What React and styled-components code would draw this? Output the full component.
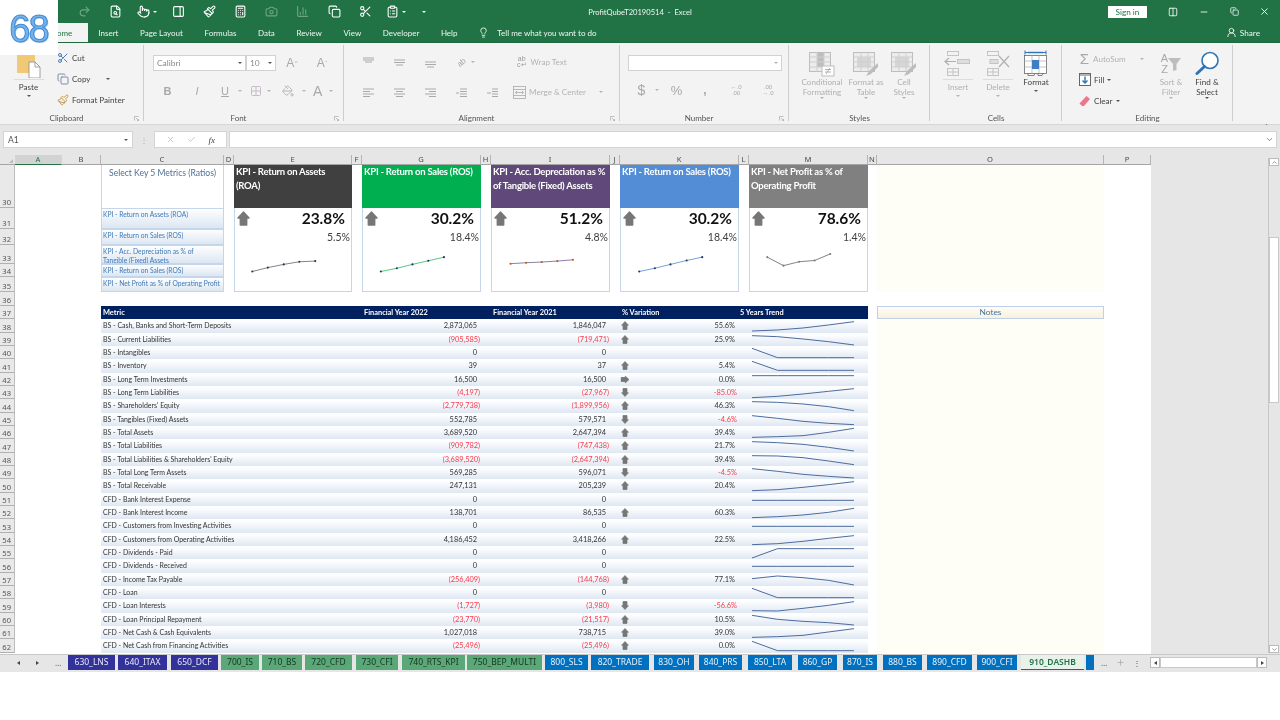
import React from "react";
import styled, { createGlobalStyle } from "styled-components";
import { Redo2, FileSearch, Pointer, PanelRight, Paintbrush, Calculator, Camera, ChartColumn, Copy, Scissors, ClipboardList, ChevronDown, ChevronUp, Lightbulb, UserRound, X, Check, Minus, Grid2x2, PaintBucket, Plus, Columns2 } from "lucide-react";

const Global = createGlobalStyle`
  html, body { margin: 0; padding: 0; background: #fff; overflow: hidden; }
  #root { width: 1280px; height: 720px; }
  * { box-sizing: border-box; }
`;

const UI = `Lato, "Noto Sans", sans-serif`;
const TABFONT = `"Noto Sans", "Open Sans", sans-serif`;
const CELL = `Lato, "Noto Sans", sans-serif`;

const Window = styled.div`
  position: relative; width: 1280px; height: 672px; display: flex; flex-direction: column;
  font-family: ${UI}; filter: blur(0.35px); overflow: hidden;
`;
const Badge = styled.div`
  position: absolute; left: 0; top: 0; width: 58px; height: 55px; background: #fff; z-index: 5;
  display: flex; align-items: center; justify-content: center; padding: 3px 1px 0 0;
  font: 400 38px/1 "Liberation Sans", sans-serif; color: #79b2e8; letter-spacing: -2px;
  -webkit-text-stroke: 1px #3f8ad6; text-shadow: 1px 1px 0 #b5d3f0;
`;
/* Title bar */
const TitleBar = styled.header`
  height: 23px; background: #217346; color: #fff; display: grid; grid-template-columns: 1fr auto 1fr; align-items: center;
`;
const Qat = styled.div`display: flex; align-items: center; padding-left: 69px;`;
const QatSlot = styled.span`
  width: ${p => p.$w || 31.2}px; display: flex; justify-content: center; align-items: center; opacity: ${p => (p.$dim ? 0.35 : 1)};
`;
const WindowTitle = styled.div`font-size: 7.6px; color: #f2f7f4; white-space: pre;`;
const TitleRight = styled.div`display: flex; align-items: center; justify-content: flex-end; padding-right: 0;`;
const SignIn = styled.div`
  width: 39px; height: 12px; background: #fff; color: #217346; font-size: 8.2px; line-height: 12px; text-align: center; margin-right: 11px;
`;
const WinBtn = styled.span`width: 30.5px; display: flex; justify-content: center;`;
const TabRow = styled.nav`height: 20px; background: #217346; display: flex; align-items: stretch; padding-left: 40px; border-bottom: 1px solid #1c6a3e;`;
const Tab = styled.div`
  padding: 0 10.8px; font-size: 8px; line-height: 20px; color: ${p => (p.$on ? "#217346" : "#eef6f1")};
  background: ${p => (p.$on ? "#f3f3f3" : "transparent")}; white-space: nowrap;
`;
const HomeTab = styled(Tab)`width: 47.5px; padding: 0 0 0 11px;`;
const TellMe = styled.div`display: flex; align-items: center; gap: 8px; margin-left: 10px; font-size: 8.05px; color: #eef6f1; line-height: 20px;`;
const ShareBox = styled.div`margin-left: auto; display: flex; align-items: center; gap: 3px; padding-right: 20px; font-size: 8.2px; color: #eef6f1;`;

/* Ribbon */
const Ribbon = styled.section`display: flex; height: 82px; background: #f3f3f3; border-bottom: 1px solid #d6d6d6;`;
const Group = styled.div`
  position: relative; width: ${p => p.$w}px; display: flex; flex-direction: column; margin-top: 2px;
  &::after { content: ""; position: absolute; right: 0; top: 0; bottom: 3px; width: 1px; background: #cdcdcd; }
`;
const GroupBody = styled.div`flex: 1; display: flex; padding-left: ${p => p.$pad || 0}px; min-height: 0;`;
const GroupLabel = styled.div`height: 12px; text-align: center; padding-right: ${p => p.$trim || 0}px; font-size: 8px; line-height: 12px; color: #555;`;
const Launcher = styled.svg`position: absolute; right: 5px; bottom: 3px; width: 5px; height: 5px;`;
const Stack = styled.div`display: flex; flex-direction: column; width: ${p => p.$w}px; padding-top: ${p => p.$top || 0}px;`;
const SmallCmd = styled.div`
  height: ${p => p.$h || 21}px; display: flex; align-items: center; gap: 3px; font-size: 8.1px; color: ${p => (p.$off ? "#b3b3b3" : "#444")}; white-space: nowrap;
`;
const Large = styled.div`
  width: ${p => p.$w}px; display: flex; flex-direction: column; align-items: center; padding-top: 5px;
  font-size: 8.1px; line-height: 10px; color: ${p => (p.$off ? "#b0b0b0" : "#444")}; text-align: center; white-space: nowrap;
`;
const LargeIcon = styled.div`height: 27px; display: flex; align-items: center; justify-content: center; margin-bottom: ${p => p.$mb || 0}px;`;
const Divider = styled.i`display: block; width: 30px; height: 1px; background: #dcdcdc; margin-bottom: 2px;`;
const PasteCol = styled(Large)`padding-top: 7px;`;
const Caret = styled.span`
  display: inline-block; width: 0; height: 0; border-left: 2px solid transparent; border-right: 2px solid transparent;
  border-top: 2.5px solid ${p => (p.$off ? "#b3b3b3" : p.$light ? "#fff" : "#555")}; margin: ${p => p.$m || "0"};
`;
const FieldRow = styled.div`display: flex; align-items: center; height: 18px; margin-top: ${p => p.$mt || 0}px;`;
const Field = styled.div`
  width: ${p => p.$w}px; height: 16px; background: #fff; border: 1px solid #d2d2d2; display: flex; align-items: center; justify-content: space-between;
  padding: 0 3px; font-size: 8.4px; color: #8a8a8a;
`;
const IconRow = styled.div`display: flex; align-items: center; height: 24px; margin-top: ${p => p.$mt || 0}px;`;
const Slot = styled.span`
  width: ${p => p.$w || 31}px; display: flex; align-items: center; justify-content: center; color: #a8a8a8; flex: none;
  font: ${p => (p.$f || "400 12px")} "Liberation Sans", sans-serif; margin-left: ${p => p.$ml || 0}px;
`;
const Tick = styled.sup`font-size: 6px; line-height: 0; margin-left: 0.5px;`;
const Col = styled.div`display: flex; flex-direction: column;`;
const OffText = styled.span`font-size: 8.1px; color: #b3b3b3; white-space: nowrap; margin-left: ${p => p.$ml || 0}px;`;
const Tilted = styled.span`display: block; transform: rotate(-40deg); font-size: 8px; color: #a5a5a5;`;
const WrapGlyph = styled.span`display: block; font: 400 7px/6px "Liberation Sans", sans-serif; color: #9a9a9a; text-align: center; margin-right: 4px;`;
const Decimal = styled.span`display: block; font: 400 6px/6px "Liberation Sans", sans-serif; color: #a8a8a8; text-align: center;`;
const SortLetters = styled.span`display: block; font: 400 11px/11px "Liberation Sans", sans-serif; color: #a8a8a8; text-align: center;`;
const BigLetter = styled.span`font: 400 14px/1 "Liberation Sans", sans-serif; color: #a8a8a8; position: relative;`;
const MergeBox = styled.span`display: flex; margin-left: 5px;`;
const CollapseCell = styled.div`flex: 1; padding: 71px 0 0 29px;`;

/* Formula bar */
const FormulaBar = styled.div`height: 30px; background: #e6e6e6; display: flex; align-items: flex-start; padding: 6px 3px 0;`;
const NameBox = styled.div`
  width: 130px; height: 17px; background: #fff; border: 1px solid #d4d4d4; display: flex; align-items: center; justify-content: space-between;
  padding: 0 4px; font-size: 8.6px; color: #555;
`;
const GripGap = styled.div`width: 21px; height: 17px; display: flex; align-items: center; justify-content: center; color: #aaa; font-size: 8px;`;
const FxBox = styled.div`
  width: 73px; height: 17px; background: #fff; border: 1px solid #d4d4d4; display: flex; align-items: center; justify-content: space-around; padding: 0 5px;
  color: #b5b5b5; font: italic 9px "Liberation Serif", serif;
`;
const FxMark = styled.span`color: #444;`;
const FormulaInput = styled.div`
  margin-left: 2px; flex: 1; height: 17px; background: #fff; border: 1px solid #d4d4d4; display: flex; align-items: center; justify-content: flex-end; padding-right: 2px; color: #666;
`;

/* Sheet */
const Workspace = styled.main`display: flex; height: 499px; background: #e6e6e6;`;
const SheetGrid = styled.div`
  width: 1151px; height: 499px; display: grid; background: #fff; overflow: hidden;
  grid-template-columns: 15px 47px 39px 123px 10px 118px 10px 119px 10px 119px 10px 119px 10px 119px 9px 227px 47px;
  grid-template-rows: 10px 43px 21px 16px 19px 13px 15px 14px repeat(26, 13.33px) 1fr;
`;
const Corner = styled.div`grid-area: 1 / 1; background: #e6e6e6; border-bottom: 1px solid #a5a5a5; position: relative;
  &::after { content: ""; position: absolute; right: 2px; bottom: 1px; border-left: 4px solid transparent; border-bottom: 4px solid #bdbdbd; }
`;
const ColHead = styled.div`
  grid-row: 1; grid-column: ${p => p.$col}; background: ${p => (p.$sel ? "#d3d3d3" : "#e6e6e6")}; border-right: 1px solid ${p => (p.$sel ? "#d3d3d3" : "#b4b4b4")};
  border-bottom: ${p => (p.$sel ? "1px solid #217346" : "1px solid #a5a5a5")};
  font: 400 7.6px/9px ${TABFONT}; text-align: center; color: ${p => (p.$sel ? "#217346" : "#4a4a4a")};
`;
const RowHead = styled.div`
  grid-column: 1; grid-row: ${p => p.$row}; background: #e9e9e9; border-bottom: 1px solid #b0b0b0; border-right: 1px solid #bdbdbd;
  display: flex; align-items: flex-end; justify-content: flex-end; padding: 0 3px 0 0; font: 400 7.6px/10px ${TABFONT}; color: #555;
`;
const SelectHead = styled.div`
  grid-area: 2 / 4; border: solid #c5d5ea; border-width: 0 1px; text-align: center; padding-top: 1px;
  font: 400 8.6px/14px ${CELL}; color: #4f6f98;
`;
const SelectBtn = styled.div`
  grid-column: 4; grid-row: ${p => p.$row}; border: 1px solid #c5d5ea; background: linear-gradient(#fdfeff, #dce6f2);
  font: 400 6.7px/9px ${CELL}; color: #3f79b8; padding: 1px 1px 0; overflow: hidden; white-space: pre-line;
`;
const Card = styled.article`
  grid-row: 2 / 8; grid-column: ${p => p.$col}; display: flex; flex-direction: column; background: #fff;
  border: solid #c5d5ea; border-width: 0 1px 1px;
`;
const CardHead = styled.div`
  height: 43px; margin: 0 -1px; padding: 0 1px 0 2px; background: ${p => p.$bg}; color: #fff; font: 700 9.5px/14px ${CELL}; letter-spacing: -0.25px; flex: none;
`;
const CardTop = styled.div`display: flex; justify-content: space-between; align-items: flex-start; height: 22px; padding: 0 6px 0 2px; flex: none;`;
const ArrowBox = styled.span`display: flex; margin-top: 3px;`;
const CardValue = styled.div`font: 700 15.5px/20px ${CELL}; color: #111;`;
const CardSub = styled.div`height: 14px; text-align: right; padding-right: 1px; font: 400 10.5px/14px ${CELL}; color: #404040; flex: none;`;
const Spark = styled.svg`display: block; width: 100%; flex: 1; min-height: 0; margin-top: 8px;`;
const Row = styled.div`
  grid-column: 4 / 15; grid-row: ${p => p.$row}; display: grid; grid-template-columns: subgrid; align-items: center; min-height: 0;
  background: ${p => (p.$head ? "#002060" : "linear-gradient(#fdfeff 15%, #dfe7f2)")};
  color: ${p => (p.$head ? "#fff" : "#333")};
  font: ${p => (p.$head ? "700 7.4px" : "400 6.95px")}/13px ${CELL};
`;
const Metric = styled.div`grid-column: 1 / 5; padding-left: 2px; white-space: nowrap; overflow: hidden;`;
const HeadCell = styled.div`grid-column: ${p => p.$c}; padding-left: ${p => p.$pl ?? 2}px; white-space: nowrap;`;
const Num = styled.div`
  grid-column: ${p => p.$c}; text-align: right; padding-right: ${p => (p.$neg ? 1 : 4)}px; color: ${p => (p.$neg ? "#fb3b4b" : "inherit")}; white-space: nowrap; font-size: 7.4px;
`;
const Var = styled.div`
  grid-column: 9; display: flex; align-items: center; justify-content: space-between; padding: 0 ${p => (p.$neg ? 2 : 4)}px 0 1px;
  color: ${p => (p.$neg ? "#fb3b4b" : "inherit")}; font-size: 7.4px;
`;
const Trend = styled.svg`grid-column: 11; display: block; width: 102px; height: 13.33px; margin-left: 3px;`;
const NotesTop = styled.div`grid-area: 2 / 16 / 8 / 16; background: #fefef6;`;
const NotesHead = styled.div`
  grid-area: 9 / 16; background: linear-gradient(#fefdf6, #f7f2dc); border: 1px solid #bfd1e8; text-align: center;
  font: 400 8.4px/10.5px ${CELL}; color: #4a719c;
`;
const NotesBody = styled.div`grid-area: 10 / 16 / 35 / 16; background: #fefef6;`;

const Gutter = styled.div`flex: 1; display: flex; justify-content: flex-end; padding: 3px 1px 1px 0;`;
const VScroll = styled.div`width: 11px; display: flex; flex-direction: column; border-left: 1px solid #c6c6c6; align-items: center;`;
const ScrollBtn = styled.div`width: 10px; height: 8px; background: #fff; border: 1px solid #bcbcbc; display: flex; align-items: center; justify-content: center;`;
const ScrollSpace = styled.div`height: ${p => p.$h}px;`;
const ScrollFill = styled.div`flex: 1;`;
const Thumb = styled.div`width: 10px; height: 166px; background: #fff; border: 1px solid #c9c9c9;`;

/* Tabs */
const TabBar = styled.footer`height: 18px; background: #e6e6e6; display: flex; align-items: flex-start; border-top: 1px solid #c8c8c8; font-family: ${TABFONT};`;
const Nav = styled.div`width: 68px; height: 15px; display: flex; align-items: center; padding-left: 17px; gap: 16px; color: #555; font-size: 8px;`;
const SheetTab = styled.div`
  width: ${p => p.$w}px; height: 15px; margin-right: ${p => p.$gap}px; flex: none; text-align: center; white-space: nowrap; overflow: hidden;
  font-size: 8.5px; line-height: 14px; background: ${p => p.$bg}; color: ${p => p.$fg}; font-weight: ${p => (p.$active ? 600 : 400)};
  border-bottom: ${p => (p.$active ? "1px solid #217346" : "none")};
`;
const TabTail = styled.div`width: 49px; display: flex; align-items: center; justify-content: space-between; height: 15px; padding: 0 2px 0 7px; color: #555; font-size: 8px;`;
const HScroll = styled.div`
  width: 117px; height: 11px; margin: 2px 0 0 7px; display: grid; grid-template-columns: 10px 1fr 10px;
`;
const HBtn = styled.div`background: #fff; border: 1px solid #bcbcbc; display: flex; align-items: center; justify-content: center;`;
const HThumb = styled.div`background: #fff; border: 1px solid #c9c9c9;`;
const Tri = styled.i`
  display: block; width: 0; height: 0; border-top: 2.5px solid transparent; border-bottom: 2.5px solid transparent;
  ${p => (p.$r ? "border-left: 3px solid #444;" : "border-right: 3px solid #444;")}
`;
const ArrowSvg = styled.svg`
  flex: none; transform: ${p => (p.$dir === "down" ? "rotate(180deg)" : p.$dir === "right" ? "rotate(90deg)" : "none")};
`;

/* ---------- drawings ---------- */
const Arrow = ({ w = 13, h = 15, dir = "up", c = "#767676" }) => (
  <ArrowSvg width={w} height={h} viewBox="0 0 14 16" $dir={dir}>
    <path d="M7 1 L13 7.5 L10.5 7.5 L10.5 15 L3.5 15 L3.5 7.5 L1 7.5 Z" fill={c} stroke={c} strokeWidth="1.4" strokeLinejoin="round" />
  </ArrowSvg>
);
const LauncherIcon = () => (
  <Launcher viewBox="0 0 5 5"><path d="M.5 4.5V.5h4M2 2l2.5 2.5M4.5 3v1.5H3" fill="none" stroke="#9a9a9a" strokeWidth=".6" /></Launcher>
);
const LinesIcon = ({ spec, w = 13, h = 11 }) => (
  <svg width={w} height={h} viewBox="0 0 13 11">
    {spec.map(([a, b, y], i) => <path key={i} d={`M${a} ${y}H${b}`} stroke="#a9a9a9" strokeWidth="1" />)}
  </svg>
);
const PasteIcon = () => (
  <svg width="26" height="25" viewBox="0 0 26 25">
    <rect x="1" y="0" width="18" height="20" fill="#f1c876" />
    <path d="M13 9h6l5 5v11H13z" fill="#fff" stroke="#8a8a8a" strokeWidth=".8" />
    <path d="M19 9v5h5" fill="none" stroke="#8a8a8a" strokeWidth=".8" />
  </svg>
);
const TableIcon = ({ variant }) => (
  <svg width="26" height="26" viewBox="0 0 26 26" fill="none">
    <rect x=".5" y="1.5" width="21" height="19" fill="#ececec" stroke="#bdbdbd" />
    {variant === "cond" && <rect x="8" y="2" width="7" height="14" fill="#bdbdbd" />}
    {variant !== "cond" && <rect x="4" y="6" width="14" height="10" fill="#d6d6d6" />}
    <path d="M.5 6h21M.5 11h21M.5 16h21M8 1.5v19M15 1.5v19" stroke="#cfcfcf" />
    {variant === "cond" ? (
      <g><rect x="13" y="15" width="12" height="10" fill="#fff" stroke="#bdbdbd" /><path d="M17 23l4-6M16 18.5h6M16 21h6" stroke="#a0a0a0" strokeWidth=".8" /></g>
    ) : (
      <path d="M25 12l-9 8-3 5 5-2 7-7z" fill="#bcbcbc" />
    )}
  </svg>
);
const CellsIcon = ({ del }) => (
  <svg width="28" height="26" viewBox="0 0 28 26" fill="none" stroke="#c4c4c4">
    <rect x="3.5" y=".5" width="11" height="4" /><rect x="3.5" y="17.5" width="11" height="7" /><path d="M9 17.5v7M3.5 21h11" />
    {del ? (
      <g><rect x="6" y="8.5" width="8" height="4" fill="#ddd" /><path d="M15 5l10 11M25 5L15 16" stroke="#b0b0b0" strokeWidth="1.2" /></g>
    ) : (
      <g><rect x="13.5" y="8.5" width="12" height="4" fill="#ddd" /><path d="M12 10.5H1M5 7l-4 3.5L5 14" stroke="#b0b0b0" strokeWidth="1.2" /></g>
    )}
  </svg>
);
const FormatIcon = () => (
  <svg width="24" height="27" viewBox="0 0 24 27" fill="none">
    <path d="M1 2.5h21M1 .5v4M22 .5v4" stroke="#2f75b5" />
    <path d="M4 2.5h15" stroke="#2f75b5" strokeWidth="1.4" />
    <rect x=".5" y="5.5" width="22" height="18" fill="#fff" stroke="#555" strokeWidth=".7" />
    <path d="M.5 11h22M.5 17h22M8 5.5v18M15 5.5v18" stroke="#aaa" strokeWidth=".7" />
    <rect x="8" y="10" width="7" height="9" fill="#3f7ec0" />
    <path d="M4 23.5v2h6l1-2M14 23.5v2h4l1-2" stroke="#555" strokeWidth=".7" />
  </svg>
);
const MergeIcon = () => (
  <svg width="13" height="13" viewBox="0 0 13 13" fill="none" stroke="#aaa" strokeWidth=".8">
    <rect x=".5" y=".5" width="12" height="12" /><path d="M.5 3.5h12M.5 9.5h12M2.5 6.5h8M4 5L2.5 6.5 4 8M9 5l1.5 1.5L9 8" />
  </svg>
);
const FillIcon = () => (
  <svg width="12" height="13" viewBox="0 0 12 13" fill="none">
    <rect x=".5" y=".5" width="11" height="12" fill="#fff" stroke="#666" />
    <path d="M.5 2h11" stroke="#666" /><path d="M6 3.5v6M3.5 7.5L6 10l2.5-2.5" stroke="#2f75b5" strokeWidth="1.4" />
  </svg>
);
const EraserIcon = () => (
  <svg width="12" height="12" viewBox="0 0 12 12"><path d="M7.5 1L11 4 5 11H3L.5 8.5z" fill="#e8788c" /></svg>
);
const SortIcon = () => (
  <svg width="13" height="18" viewBox="0 0 13 18"><path d="M0 3h13L8.5 9v6l-3.5 1V9z" fill="#bdbdbd" /></svg>
);
const FindIcon = () => (
  <svg width="25" height="25" viewBox="0 0 25 25" fill="none">
    <circle cx="15" cy="9.5" r="8" fill="#fff" stroke="#2f75b5" strokeWidth="1.6" />
    <path d="M9.5 15.5L2 22.5" stroke="#2f75b5" strokeWidth="3" strokeLinecap="round" />
  </svg>
);

/* ---------- data ---------- */
const COLS = [["A", 2], ["B", 3], ["C", 4], ["D", 5], ["E", 6], ["F", 7], ["G", 8], ["H", 9], ["I", 10], ["J", 11], ["K", 12], ["L", 13], ["M", 14], ["N", 15], ["O", 16], ["P", 17]];
const CARDS = [
  { col: 6, left: 234, bg: "#404040", title: "KPI - Return on Assets (ROA)", v: "23.8%", s: "5.5%", line: "#7f7f7f", dot: "#1f3864",
    pts: [[251.7, 272], [267.7, 268], [284, 264.7], [300, 262], [316.3, 261.3]] },
  { col: 8, left: 362, bg: "#00b050", title: "KPI - Return on Sales (ROS)", v: "30.2%", s: "18.4%", line: "#4dc97f", dot: "#1f3864",
    pts: [[380.3, 272], [396.7, 268.7], [412.7, 264.7], [429, 261], [445, 257.3]] },
  { col: 10, left: 491, bg: "#60497a", title: "KPI - Acc. Depreciation as % of Tangible (Fixed) Assets", v: "51.2%", s: "4.8%", line: "#8a7ba6", dot: "#c55a11",
    pts: [[510, 264], [526, 263], [542, 262.3], [558, 261.3], [574, 260]] },
  { col: 12, left: 620, bg: "#538dd5", title: "KPI - Return on Sales (ROS)", v: "30.2%", s: "18.4%", line: "#6f9fdc", dot: "#1f3864",
    pts: [[638.7, 272], [654.7, 268.7], [670.7, 264.7], [687.3, 260.7], [703.3, 257.3]] },
  { col: 14, left: 749, bg: "#808080", title: "KPI - Net Profit as % of Operating Profit", v: "78.6%", s: "1.4%", line: "#808080", dot: "#808080",
    pts: [[766.7, 257.3], [783.3, 266], [799.3, 262], [815.3, 260.7], [831.3, 254]] },
];
const SELECT = ["KPI - Return on Assets (ROA)", "KPI - Return on Sales (ROS)", "KPI - Acc. Depreciation as % of\nTangible (Fixed) Assets", "KPI - Return on Sales (ROS)", "KPI - Net Profit as % of Operating Profit"];
const ROWS = [
  ["BS - Cash, Banks and Short-Term Deposits", "2,873,065", "1,846,047", "up", "55.6%", [36, 33, 27, 18, 8]],
  ["BS - Current Liabilities", "(905,585)", "(719,471)", "up", "25.9%", [8, 11, 18, 26, 36]],
  ["BS - Intangibles", "0", "0", "", "", [7, 35, 35, 35, 35]],
  ["BS - Inventory", "39", "37", "up", "5.4%", [7, 34, 34, 34, 34]],
  ["BS - Long Term Investments", "16,500", "16,500", "right", "0.0%", [8, 8, 8, 8, 8]],
  ["BS - Long Term Liabilities", "(4,197)", "(27,967)", "down", "-85.0%", [35, 31, 24, 16, 8]],
  ["BS - Shareholders' Equity", "(2,779,738)", "(1,899,956)", "up", "46.3%", [8, 10, 15, 23, 35]],
  ["BS - Tangibles (Fixed) Assets", "552,785", "579,571", "down", "-4.6%", [8, 16, 25, 31, 35]],
  ["BS - Total Assets", "3,689,520", "2,647,394", "up", "39.4%", [34, 32, 29, 19, 7]],
  ["BS - Total Liabilities", "(909,782)", "(747,438)", "up", "21.7%", [8, 11, 16, 25, 36]],
  ["BS - Total Liabilities & Shareholders' Equity", "(3,689,520)", "(2,647,394)", "up", "39.4%", [8, 9, 14, 24, 35]],
  ["BS - Total Long Term Assets", "569,285", "596,071", "down", "-4.5%", [8, 16, 25, 31, 36]],
  ["BS - Total Receivable", "247,131", "205,239", "up", "20.4%", [35, 32, 25, 17, 8]],
  ["CFD - Bank Interest Expense", "0", "0", "", "", [22, 22, 22, 22, 22]],
  ["CFD - Bank Interest Income", "138,701", "86,535", "up", "60.3%", [35, 32, 27, 19, 7]],
  ["CFD - Customers from Investing Activities", "0", "0", "", "", [22, 22, 22, 22, 22]],
  ["CFD - Customers from Operating Activities", "4,186,452", "3,418,266", "up", "22.5%", [35, 32, 25, 16, 8]],
  ["CFD - Dividends - Paid", "0", "0", "", "", [36, 8, 8, 8, 8]],
  ["CFD - Dividends - Received", "0", "0", "", "", [22, 22, 22, 22, 22]],
  ["CFD - Income Tax Payable", "(256,409)", "(144,768)", "up", "77.1%", [17, 9, 14, 22, 36]],
  ["CFD - Loan", "0", "0", "", "", [7, 35, 35, 35, 35]],
  ["CFD - Loan Interests", "(1,727)", "(3,980)", "down", "-56.6%", [35, 36, 28, 19, 8]],
  ["CFD - Loan Principal Repayment", "(23,770)", "(21,517)", "up", "10.5%", [7, 19, 25, 29, 36]],
  ["CFD - Net Cash & Cash Equivalents", "1,027,018", "738,715", "up", "39.0%", [34, 32, 28, 18, 8]],
  ["CFD - Net Cash from Financing Activities", "(25,496)", "(25,496)", "up", "0.0%", [7, 35, 35, 35, 35]],
];
const PURPLE = ["#32329a", "#e8e8f8"], GREEN = ["#5aa877", "#17351f"], BLUE = ["#0070c0", "#e6f2fb"];
const TABS = [
  ["630_LNS", 47, 3, PURPLE], ["640_ITAX", 49, 4, PURPLE], ["650_DCF", 47, 3, PURPLE],
  ["700_IS", 38, 3, GREEN], ["710_BS", 40, 3, GREEN], ["720_CFD", 47, 4, GREEN], ["730_CFI", 42, 4, GREEN], ["740_RTS_KPI", 63, 2, GREEN], ["750_BEP_MULTI", 75, 3, GREEN],
  ["800_SLS", 43, 3, BLUE], ["820_TRADE", 58, 5, BLUE], ["830_OH", 40, 5, BLUE], ["840_PRS", 43, 6, BLUE], ["850_LTA", 44, 6, BLUE], ["860_GP", 39, 6, BLUE], ["870_IS", 34, 6, BLUE], ["880_BS", 39, 5, BLUE], ["890_CFD", 45, 5, BLUE], ["900_CFI", 40, 4, BLUE],
];
const RH = ["30", "31", "32", "33", "34", "35", "36"];

const trendPath = ys => ys.map((y, i) => `${i ? "L" : "M"}${i * 76.5} ${y}`).join(" ");

const isNeg = s => s.startsWith("(") || s.startsWith("-");

export default function App() {
  return (
    <Window>
      <Global />
      <Badge>68</Badge>
      <TitleBar>
        <Qat>
          <QatSlot $dim><Redo2 size={13} /></QatSlot>
          <QatSlot><FileSearch size={13} /></QatSlot>
          <QatSlot><Pointer size={13} /><Caret $light $m="0 0 0 3px" /></QatSlot>
          <QatSlot><PanelRight size={13} /></QatSlot>
          <QatSlot><Paintbrush size={13} /></QatSlot>
          <QatSlot><Calculator size={13} /></QatSlot>
          <QatSlot $dim><Camera size={13} /></QatSlot>
          <QatSlot $dim><ChartColumn size={13} /></QatSlot>
          <QatSlot><Copy size={13} /></QatSlot>
          <QatSlot><Scissors size={13} /></QatSlot>
          <QatSlot><ClipboardList size={13} /><Caret $light $m="0 0 0 3px" /></QatSlot>
          <QatSlot $w={24}><Caret $light /></QatSlot>
        </Qat>
        <WindowTitle>ProfitQubeT20190514  -  Excel</WindowTitle>
        <TitleRight>
          <SignIn>Sign in</SignIn>
          <WinBtn><Columns2 size={10} color="#fff" /></WinBtn>
          <WinBtn><Minus size={10} color="#fff" /></WinBtn>
          <WinBtn><Copy size={9} color="#fff" /></WinBtn>
          <WinBtn><X size={11} color="#fff" /></WinBtn>
        </TitleRight>
      </TitleBar>
      <TabRow>
        <HomeTab $on>Home</HomeTab>
        {["Insert", "Page Layout", "Formulas", "Data", "Review", "View", "Developer", "Help"].map(t => <Tab key={t}>{t}</Tab>)}
        <TellMe><Lightbulb size={11} color="#eef6f1" />Tell me what you want to do</TellMe>
        <ShareBox><UserRound size={11} color="#eef6f1" />Share</ShareBox>
      </TabRow>

      <Ribbon>
        <Group $w={144}>
          <GroupBody>
            <PasteCol $w={57}>
              <LargeIcon><PasteIcon /></LargeIcon>
              <Divider />
              Paste
              <Caret $m="3px 0 0" />
            </PasteCol>
            <Stack $w={86} $top={2.5}>
              <SmallCmd><Scissors size={12} color="#4f7fb8" />Cut</SmallCmd>
              <SmallCmd><Copy size={12} color="#7f8ea0" />Copy<Caret $m="0 0 0 12px" /></SmallCmd>
              <SmallCmd><Paintbrush size={12} color="#c79a4a" />Format Painter</SmallCmd>
            </Stack>
          </GroupBody>
          <GroupLabel $trim={11}>Clipboard</GroupLabel>
          <LauncherIcon />
        </Group>

        <Group $w={200}>
          <GroupBody $pad={9}>
            <Col>
              <FieldRow $mt={9}>
                <Field $w={93}>Calibri<Caret /></Field>
                <Field $w={30}>10<Caret /></Field>
                <Slot $w={30} $ml={1}>A<Tick>^</Tick></Slot>
                <Slot $w={30}>A<Tick>ˇ</Tick></Slot>
              </FieldRow>
              <IconRow $mt={7}>
                <Slot $w={29} $f="700 11px">B</Slot>
                <Slot $w={30} $f="italic 400 11px">I</Slot>
                <Slot $w={26} $f="400 11px"><u>U</u></Slot><Caret $off $m="0 5px 0 0" />
                <Slot $w={17}><Grid2x2 size={12} color="#c9bcc9" /></Slot><Caret $off $m="0 6px 0 3px" />
                <Slot $w={22}><PaintBucket size={12} color="#b5b5b5" /></Slot><Caret $off $m="0 7px 0 3px" />
                <BigLetter>A</BigLetter><Caret $off $m="0 0 0 7px" />
              </IconRow>
            </Col>
          </GroupBody>
          <GroupLabel $trim={11}>Font</GroupLabel>
          <LauncherIcon />
        </Group>

        <Group $w={276}>
          <GroupBody $pad={9}>
            <Col>
              <IconRow $mt={5}>
                <Slot><LinesIcon spec={[[1, 12, 1], [1, 12, 3], [3, 10, 5]]} /></Slot>
                <Slot><LinesIcon spec={[[1, 12, 3], [1, 12, 5.5], [3, 10, 8]]} /></Slot>
                <Slot><LinesIcon spec={[[1, 12, 5], [1, 12, 7.5], [3, 10, 10]]} /></Slot>
                <Slot><Tilted>ab</Tilted></Slot><Caret $off $m="0 42px 0 -6px" />
                <WrapGlyph>ab<br />c↵</WrapGlyph><OffText>Wrap Text</OffText>
              </IconRow>
              <IconRow $mt={6}>
                <Slot><LinesIcon spec={[[1, 12, 2], [1, 8, 4.5], [1, 12, 7], [1, 8, 9.5]]} /></Slot>
                <Slot><LinesIcon spec={[[1, 12, 2], [3, 10, 4.5], [1, 12, 7], [3, 10, 9.5]]} /></Slot>
                <Slot><LinesIcon spec={[[1, 12, 2], [5, 12, 4.5], [1, 12, 7], [5, 12, 9.5]]} /></Slot>
                <Slot><LinesIcon spec={[[5, 12, 2], [5, 12, 4.5], [1, 4, 6], [5, 12, 7], [5, 12, 9.5]]} /></Slot>
                <Slot><LinesIcon spec={[[6, 12, 2], [6, 12, 4.5], [1, 5, 6], [6, 12, 7], [6, 12, 9.5]]} /></Slot>
                <MergeBox><MergeIcon /></MergeBox>
                <OffText $ml={3}>Merge &amp; Center</OffText>
                <Caret $off $m="0 0 0 13px" />
              </IconRow>
            </Col>
          </GroupBody>
          <GroupLabel $trim={11}>Alignment</GroupLabel>
          <LauncherIcon />
        </Group>

        <Group $w={169}>
          <GroupBody $pad={8}>
            <Col>
              <FieldRow $mt={9}><Field $w={154}>&nbsp;<Caret $off /></Field></FieldRow>
              <IconRow $mt={6}>
                <Slot $w={27} $f="400 14px">$</Slot><Caret $off $m="0 4px 0 0" />
                <Slot $w={27} $f="400 13px">%</Slot>
                <Slot $w={30} $f="700 12px">,</Slot>
                <Slot $w={32}><Decimal>←.0<br />.00</Decimal></Slot>
                <Slot $w={32}><Decimal>.00<br />→.0</Decimal></Slot>
              </IconRow>
            </Col>
          </GroupBody>
          <GroupLabel $trim={11}>Number</GroupLabel>
          <LauncherIcon />
        </Group>

        <Group $w={141}>
          <GroupBody $pad={11}>
            <Large $w={44} $off><LargeIcon><TableIcon variant="cond" /></LargeIcon>Conditional<br />Formatting <Caret $off /></Large>
            <Large $w={44} $off><LargeIcon><TableIcon /></LargeIcon>Format as<br />Table <Caret $off /></Large>
            <Large $w={32} $off><LargeIcon><TableIcon /></LargeIcon>Cell<br />Styles <Caret $off /></Large>
          </GroupBody>
          <GroupLabel>Styles</GroupLabel>
        </Group>

        <Group $w={132}>
          <GroupBody $pad={8}>
            <Large $w={40} $off><LargeIcon $mb={2}><CellsIcon /></LargeIcon><Divider />Insert<Caret $off $m="3px 0 0" /></Large>
            <Large $w={40} $off><LargeIcon $mb={2}><CellsIcon del /></LargeIcon><Divider />Delete<Caret $off $m="3px 0 0" /></Large>
            <Large $w={36}><LargeIcon><FormatIcon /></LargeIcon>Format<Caret $m="3px 0 0" /></Large>
          </GroupBody>
          <GroupLabel>Cells</GroupLabel>
        </Group>

        <Group $w={171}>
          <GroupBody $pad={17}>
            <Stack $w={73} $top={3}>
              <SmallCmd $off><Slot $w={11} $f="400 15px">Σ</Slot>AutoSum<Caret $off $m="0 0 0 11px" /></SmallCmd>
              <SmallCmd><FillIcon />Fill<Caret /></SmallCmd>
              <SmallCmd><EraserIcon />Clear<Caret /></SmallCmd>
            </Stack>
            <Large $w={38} $off><LargeIcon><SortLetters>A<br />Z</SortLetters><SortIcon /></LargeIcon>Sort &amp;<br />Filter <Caret $off /></Large>
            <Large $w={34}><LargeIcon><FindIcon /></LargeIcon>Find &amp;<br />Select <Caret /></Large>
          </GroupBody>
          <GroupLabel>Editing</GroupLabel>
        </Group>
        <CollapseCell><ChevronUp size={9} color="#555" /></CollapseCell>
      </Ribbon>

      <FormulaBar>
        <NameBox>A1<Caret /></NameBox>
        <GripGap>⋮</GripGap>
        <FxBox><X size={9} /><Check size={9} /><FxMark>fx</FxMark></FxBox>
        <FormulaInput><ChevronDown size={9} /></FormulaInput>
      </FormulaBar>

      <Workspace>
        <SheetGrid>
          <Corner />
          {COLS.map(([c, n]) => <ColHead key={c} $sel={c === "A"} $col={n}>{c}</ColHead>)}
          {RH.map((r, i) => <RowHead key={r} $row={i + 2}>{r}</RowHead>)}
          {Array.from({ length: 26 }, (_, i) => <RowHead key={i} $row={i + 9}>{37 + i}</RowHead>)}

          <SelectHead>Select Key 5 Metrics (Ratios)</SelectHead>
          {SELECT.map((s, i) => <SelectBtn key={i} $row={i + 3}>{s}</SelectBtn>)}

          {CARDS.map(c => (
            <Card key={c.col} $col={c.col}>
              <CardHead $bg={c.bg}>{c.title}</CardHead>
              <CardTop><ArrowBox><Arrow /></ArrowBox><CardValue>{c.v}</CardValue></CardTop>
              <CardSub>{c.s}</CardSub>
              <Spark viewBox={`${c.left} 252 118 40`} preserveAspectRatio="xMinYMin meet">
                <polyline points={c.pts.map(p => p.join(",")).join(" ")} fill="none" stroke={c.line} strokeWidth="1" />
                {c.pts.map((p, i) => <circle key={i} cx={p[0]} cy={p[1]} r="1.1" fill={c.dot} />)}
              </Spark>
            </Card>
          ))}

          <NotesTop />
          <Row $head $row={9}>
            <HeadCell $c="1 / 5">Metric</HeadCell>
            <HeadCell $c={5}>Financial Year 2022</HeadCell>
            <HeadCell $c={7}>Financial Year 2021</HeadCell>
            <HeadCell $c={9}>% Variation</HeadCell>
            <HeadCell $c={10} $pl={1}>5 Years Trend</HeadCell>
          </Row>
          <NotesHead>Notes</NotesHead>
          <NotesBody />

          {ROWS.map((r, i) => (
            <Row key={i} $row={i + 10}>
              <Metric>{r[0]}</Metric>
              <Num $c={5} $neg={isNeg(r[1])}>{r[1]}</Num>
              <Num $c={7} $neg={isNeg(r[2])}>{r[2]}</Num>
              <Var $neg={isNeg(r[4])}>
                {r[3] ? <Arrow w={8} h={9} dir={r[3]} /> : <span />}
                <span>{r[4]}</span>
              </Var>
              <Trend viewBox="0 0 306 40">
                <path d={trendPath(r[5])} fill="none" stroke="#4b6b9e" strokeWidth="3" />
              </Trend>
            </Row>
          ))}
        </SheetGrid>
        <Gutter>
          <VScroll>
            <ScrollBtn><ChevronUp size={7} color="#555" /></ScrollBtn>
            <ScrollSpace $h={71} />
            <Thumb />
            <ScrollFill />
            <ScrollBtn><ChevronDown size={7} color="#555" /></ScrollBtn>
          </VScroll>
        </Gutter>
      </Workspace>

      <TabBar>
        <Nav><Tri /><Tri $r />…</Nav>
        {TABS.map(([t, w, g, [bg, fg]]) => <SheetTab key={t} $w={w} $gap={g} $bg={bg} $fg={fg}>{t}</SheetTab>)}
        <SheetTab $w={63} $gap={2} $bg="#e8f1ea" $fg="#217346" $active>910_DASHB</SheetTab>
        <SheetTab $w={8} $gap={0} $bg="#0070c0" $fg="#fff" />
        <TabTail>…<Plus size={9} color="#aaa" />⋮</TabTail>
        <HScroll>
          <HBtn><Tri /></HBtn>
          <HThumb />
          <HBtn><Tri $r /></HBtn>
        </HScroll>
      </TabBar>
    </Window>
  );
}
